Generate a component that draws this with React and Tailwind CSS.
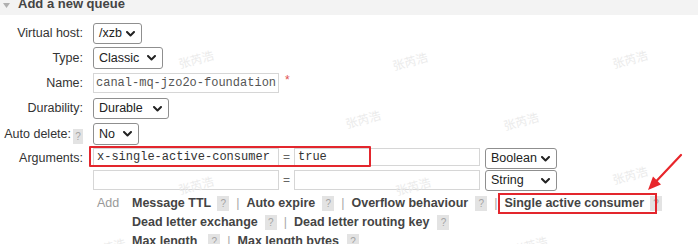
import React from 'react'

const sans = "font-['Liberation_Sans',Arial,sans-serif]"
const mono = "font-['Liberation_Mono','Courier_New',monospace]"

function Chevron() {
  return (
    <svg width="9" height="6" viewBox="0 0 9 6" className="shrink-0">
      <polyline points="1,1 4.5,4.5 8,1" fill="none" stroke="#222" strokeWidth="2" strokeLinecap="round" strokeLinejoin="round" />
    </svg>
  )
}

function Select({ value, size }) {
  return (
    <div className={`flex items-center justify-between border border-[#8f8f8f] rounded-[3px] bg-white pl-[5px] pr-[6px] text-[12.5px] text-[#222] ${size}`}>
      <span>{value}</span>
      <Chevron />
    </div>
  )
}

function Help({ size = 'w-[12px] h-[15px]' }) {
  return (
    <span className={`inline-flex items-center justify-center bg-[#e3e3e3] text-[#a3a3a3] text-[10px] font-normal ${size}`}>?</span>
  )
}

function Sep() {
  return <span className="mx-[7px] text-[#a8a8a8] font-normal">|</span>
}

function Label({ children }) {
  return (
    <div className="w-[83px] flex items-center justify-end text-[12.5px] text-[#333] whitespace-nowrap">
      {children}
    </div>
  )
}

const watermarks = [
  [178, 50], [392, 52], [612, 50], [345, 110], [503, 112],
  [178, 176], [395, 177], [612, 166], [512, 236], [90, 238],
]

export default function App() {
  return (
    <div className={`relative w-[698px] h-[244px] overflow-hidden bg-white ${sans}`}>
      {/* header */}
      <div className="h-[15px] bg-[#f3f3f3] flex items-start overflow-hidden">
        <svg width="7" height="5" viewBox="0 0 7 5" className="ml-[3px] mt-[3px]">
          <polygon points="0,0 7,0 3.5,5" fill="#b0b0b0" />
        </svg>
        <span className="ml-[8px] mt-[-3px] text-[13px] leading-[13px] font-bold text-[#444]">Add a new queue</span>
      </div>

      {/* form rows */}
      <div className="flex mt-[8px] h-[21px]">
        <Label>Virtual host:</Label>
        <div className="ml-[10px]"><Select value="/xzb" size="w-[49px] h-[21px]" /></div>
      </div>
      <div className="flex mt-[3px] h-[22px]">
        <Label>Type:</Label>
        <div className="ml-[10px]"><Select value="Classic" size="w-[70px] h-[22px]" /></div>
      </div>
      <div className="flex mt-[4px] h-[20px]">
        <Label>Name:</Label>
        <div className="ml-[10px] flex items-start">
          <div className={`w-[186px] h-[20px] border border-[#d6d6d6] flex items-center pl-[2px] text-[12px] text-[#555] ${mono}`}>
            canal-mq-jzo2o-foundation
          </div>
          <span className="ml-[6px] text-[#e05050] text-[12px] leading-[12px] mt-[1px]">*</span>
        </div>
      </div>
      <div className="flex mt-[5px] h-[21px]">
        <Label>Durability:</Label>
        <div className="ml-[10px]"><Select value="Durable" size="w-[76px] h-[21px]" /></div>
      </div>
      <div className="flex mt-[4px] h-[22px]">
        <Label>
          Auto delete:
          <span className="ml-[2px] mt-[4px]"><Help size="w-[10px] h-[15px]" /></span>
        </Label>
        <div className="ml-[10px]"><Select value="No" size="w-[46px] h-[22px]" /></div>
      </div>

      {/* arguments */}
      <div className="relative flex mt-[3px] h-[21px]">
        <Label>Arguments:</Label>
        <div className="ml-[10px] flex items-start">
          <div className={`w-[186px] h-[18px] border border-[#d6d6d6] flex items-center pl-[3px] text-[12px] text-[#333] ${mono}`}>
            x-single-active-consumer
          </div>
          <div className="w-[15px] text-center text-[12px] text-[#666] leading-[18px]">=</div>
          <div className={`w-[186px] h-[18px] border border-[#d6d6d6] flex items-center pl-[3px] text-[12px] text-[#333] ${mono}`}>
            true
          </div>
          <div className="ml-[5px]"><Select value="Boolean" size="w-[72px] h-[21px]" /></div>
        </div>
        <div className="absolute left-[89px] top-[-2px] w-[282px] h-[21px] border-2 border-[#e3262d] rounded-[1px]" />
      </div>
      <div className="flex mt-[1px] h-[21px]">
        <div className="w-[83px]" />
        <div className="ml-[10px] flex items-start">
          <div className="w-[186px] h-[20px] border border-[#d6d6d6]" />
          <div className="w-[15px] text-center text-[12px] text-[#666] leading-[20px]">=</div>
          <div className="w-[186px] h-[20px] border border-[#d6d6d6]" />
          <div className="ml-[5px]"><Select value="String" size="w-[72px] h-[21px]" /></div>
        </div>
      </div>

      {/* add + shortcuts */}
      <div className="flex mt-[3px] ml-[93px]">
        <div className="w-[39px] pl-[4px] h-[19px] flex items-center text-[12.5px] text-[#999]">Add</div>
        <div className="flex flex-col text-[12.5px] font-bold text-[#444]">
          <div className="flex items-center h-[19px] whitespace-nowrap">
            <span>Message TTL</span><span className="ml-[6px]"><Help /></span><Sep />
            <span>Auto expire</span><span className="ml-[7px]"><Help /></span><Sep />
            <span>Overflow behaviour</span><span className="ml-[7px]"><Help /></span><Sep />
            <span className="relative">
              Single active consumer
              <span className="absolute left-[-6px] right-[-13px] top-[-1px] bottom-[-1px] border-2 border-[#e3262d]" />
            </span>
            <span className="ml-[6px]"><Help /></span>
          </div>
          <div className="flex items-center h-[19px] whitespace-nowrap">
            <span>Dead letter exchange</span><span className="ml-[7px]"><Help /></span><Sep />
            <span>Dead letter routing key</span><span className="ml-[8px]"><Help /></span>
          </div>
          <div className="flex items-center h-[19px] whitespace-nowrap">
            <span>Max length</span><span className="ml-[11px]"><Help /></span><Sep />
            <span>Max length bytes</span><span className="ml-[8px]"><Help /></span>
          </div>
        </div>
      </div>

      {/* annotation arrow */}
      <svg width="50" height="45" viewBox="0 0 50 45" className="absolute left-[640px] top-[150px]">
        <line x1="41" y1="5" x2="16" y2="31.5" stroke="#e8262b" strokeWidth="2.2" strokeLinecap="round" />
        <polygon points="8,40 21,34.5 13,26.5" fill="#e8262b" />
      </svg>

      {/* watermark */}
      {watermarks.map(([x, y], i) => (
        <span
          key={i}
          className="absolute text-[12px] text-[#ebebeb] rotate-[-15deg] font-['Noto_Sans_CJK_SC',sans-serif] pointer-events-none"
          style={{ left: x, top: y }}
        >
          张芮浩
        </span>
      ))}
    </div>
  )
}
